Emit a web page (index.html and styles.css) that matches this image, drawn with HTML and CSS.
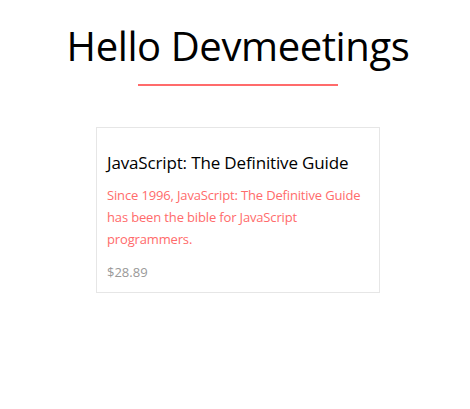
FILE: index.html
```html
<!DOCTYPE html>
<html>
<head>
<meta charset="utf-8">
<link rel="stylesheet" href="styles.css">
</head>
<body>
<div class="page">
  <h1 class="title">Hello Devmeetings</h1>
  <div class="rule"></div>
  <div class="card">
    <h3 class="card-title">JavaScript: The Definitive Guide</h3>
    <p class="card-desc">Since 1996, JavaScript: The Definitive Guide has been the bible for JavaScript programmers.</p>
    <p class="card-price">$28.89</p>
  </div>
</div>
</body>
</html>
```
FILE: styles.css
```css
html, body {
  margin: 0;
  padding: 0;
  background: #fff;
}
body {
  font-family: "Open Sans", "Noto Sans", sans-serif;
  color: #000;
}
.page {
  display: flex;
  flex-direction: column;
  align-items: center;
  padding-left: 6px;
  padding-top: 22px;
}
.title {
  margin: 0;
  font-weight: 400;
  font-size: 40px;
  line-height: 48px;
  letter-spacing: -0.4px;
}
.rule {
  width: 200px;
  height: 2px;
  background: #ff6b6b;
  margin-top: 14px;
}
.card {
  margin-top: 41px;
  width: 284px;
  box-sizing: border-box;
  border: 1px solid #e6e6e6;
  padding: 20px 10px 10px 10px;
}
.card-title {
  margin: 0;
  font-weight: 400;
  font-size: 17px;
  line-height: 30px;
  letter-spacing: -0.15px;
}
.card-desc {
  margin: 6px 0 0;
  color: #ff6b6b;
  font-size: 13px;
  line-height: 22px;
  letter-spacing: -0.15px;
}
.card-price {
  margin: 12px 0 0;
  color: #999;
  font-size: 13px;
  line-height: 20px;
}
```
